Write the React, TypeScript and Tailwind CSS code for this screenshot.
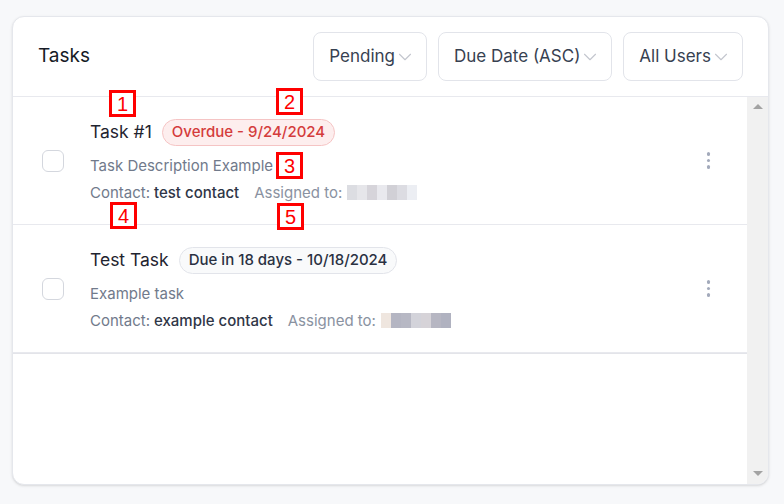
import { ChevronDown } from "lucide-react"

const font = { fontFamily: "Inter, 'Noto Sans', sans-serif" }

function Dropdown({ label }: { label: string }) {
  return (
    <div className="h-[49px] flex items-center pl-[15px] pr-[10px] rounded-lg border border-[#e2e4ea] bg-white text-[17px] text-[#374151]">
      <span>{label}</span>
      <ChevronDown className="w-[22px] h-[22px] -ml-[1px] text-[#c3c6ce]" strokeWidth={1.2} />
    </div>
  )
}

function Kebab() {
  return (
    <div className="flex flex-col gap-[3px] items-center">
      <div className="w-[3.5px] h-[3.5px] rounded-full bg-[#a3aabb]"></div>
      <div className="w-[3.5px] h-[3.5px] rounded-full bg-[#a3aabb]"></div>
      <div className="w-[3.5px] h-[3.5px] rounded-full bg-[#a3aabb]"></div>
    </div>
  )
}

function Blur({ shades }: { shades: string[] }) {
  return (
    <div className="flex h-[15px]">
      {shades.map((c, i) => (
        <div key={i} className="w-[10px] h-full" style={{ background: c }}></div>
      ))}
    </div>
  )
}

function TaskRow({
  title,
  badge,
  overdue,
  desc,
  contact,
  shades,
}: {
  title: string
  badge: string
  overdue?: boolean
  desc: string
  contact: string
  shades: string[]
}) {
  return (
    <div className="flex items-center h-[128px] border-b border-[#e8e9ee] pl-[29px] pr-[37px]">
      <div className="w-[22px] h-[22px] rounded-[6px] border border-[#d4d7de] bg-white"></div>
      <div className="flex-1 ml-[26px] flex flex-col">
        <div className="flex items-center gap-[10px] h-[27px]">
          <span className="text-[17.5px] text-[#1f2430]">{title}</span>
          {overdue ? (
            <span className="h-[27px] flex items-center px-[9px] rounded-full border border-[#f5c4c4] bg-[#fdeeee] text-[15px] font-medium text-[#d43c3c]">
              {badge}
            </span>
          ) : (
            <span className="h-[27px] flex items-center px-[9px] rounded-full border border-[#e2e4ea] bg-[#f9fafb] text-[15px] font-medium text-[#2a3142]">
              {badge}
            </span>
          )}
        </div>
        <div className="mt-[10px] text-[15px] leading-[20px] text-[#717a8b]">{desc}</div>
        <div className="mt-[7px] flex items-center text-[15px] leading-[20px]">
          <span className="text-[#717a8b]">Contact:</span>
          <span className="ml-[4px] font-medium text-[#2f3647]">{contact}</span>
          <span className="ml-[15px] text-[#8a92a1]">Assigned to:</span>
          <span className="ml-[5px]">
            <Blur shades={shades} />
          </span>
        </div>
      </div>
      <Kebab />
    </div>
  )
}

function Marker({ n, cls }: { n: string; cls: string }) {
  return (
    <div
      className={`absolute w-[27px] h-[27px] border-[3px] border-[#ff0000] bg-white flex items-center justify-center text-[20px] leading-none text-[#ff0000] ${cls}`}
      style={{ fontFamily: "'Liberation Sans', Arial, sans-serif" }}
    >
      {n}
    </div>
  )
}

export default function App() {
  return (
    <div className="relative w-[784px] h-[504px] bg-[#f7f8fa] pl-3 pt-4" style={font}>
      <div className="w-[757px] h-[469px] rounded-xl border border-[#e5e7ec] bg-white shadow-sm overflow-hidden flex flex-col">
        <div className="h-[80px] shrink-0 flex items-center justify-between pl-[25px] pr-[25px] border-b border-[#e8e9ee]">
          <span className="text-[19px] text-[#161b26]">Tasks</span>
          <div className="flex gap-[11px]">
            <Dropdown label="Pending" />
            <Dropdown label="Due Date (ASC)" />
            <Dropdown label="All Users" />
          </div>
        </div>
        <div className="flex-1 flex">
          <div className="flex-1 flex flex-col">
            <TaskRow
              title="Task #1"
              badge="Overdue - 9/24/2024"
              overdue
              desc="Task Description Example"
              contact="test contact"
              shades={["#dcdde2", "#e6e6ea", "#d6d4da", "#e9e9ee", "#d1d0d6", "#dcdce2", "#eceef3"]}
            />
            <div className="border-b border-[#e3e4e9]">
              <TaskRow
                title="Test Task"
                badge="Due in 18 days - 10/18/2024"
                desc="Example task"
                contact="example contact"
                shades={["#efe6df", "#b4b5c2", "#b7b8c4", "#d3d3da", "#d6d3d8", "#b6b6c2", "#b0b2c0"]}
              />
            </div>
          </div>
          <div className="w-[21px] bg-[#f1f1f1] flex flex-col items-center justify-between py-[7px]">
            <svg width="10" height="6" viewBox="0 0 10 6">
              <path d="M5 0 L10 5 L0 5 Z" fill="#a3a3a3" />
            </svg>
            <svg width="10" height="6" viewBox="0 0 10 6">
              <path d="M0 0 L10 0 L5 5 Z" fill="#a3a3a3" />
            </svg>
          </div>
        </div>
      </div>
      <Marker n="1" cls="left-[109px] top-[90px]" />
      <Marker n="2" cls="left-[276px] top-[88px]" />
      <Marker n="3" cls="left-[276px] top-[152px]" />
      <Marker n="4" cls="left-[110px] top-[202px]" />
      <Marker n="5" cls="left-[277px] top-[203px]" />
    </div>
  )
}
